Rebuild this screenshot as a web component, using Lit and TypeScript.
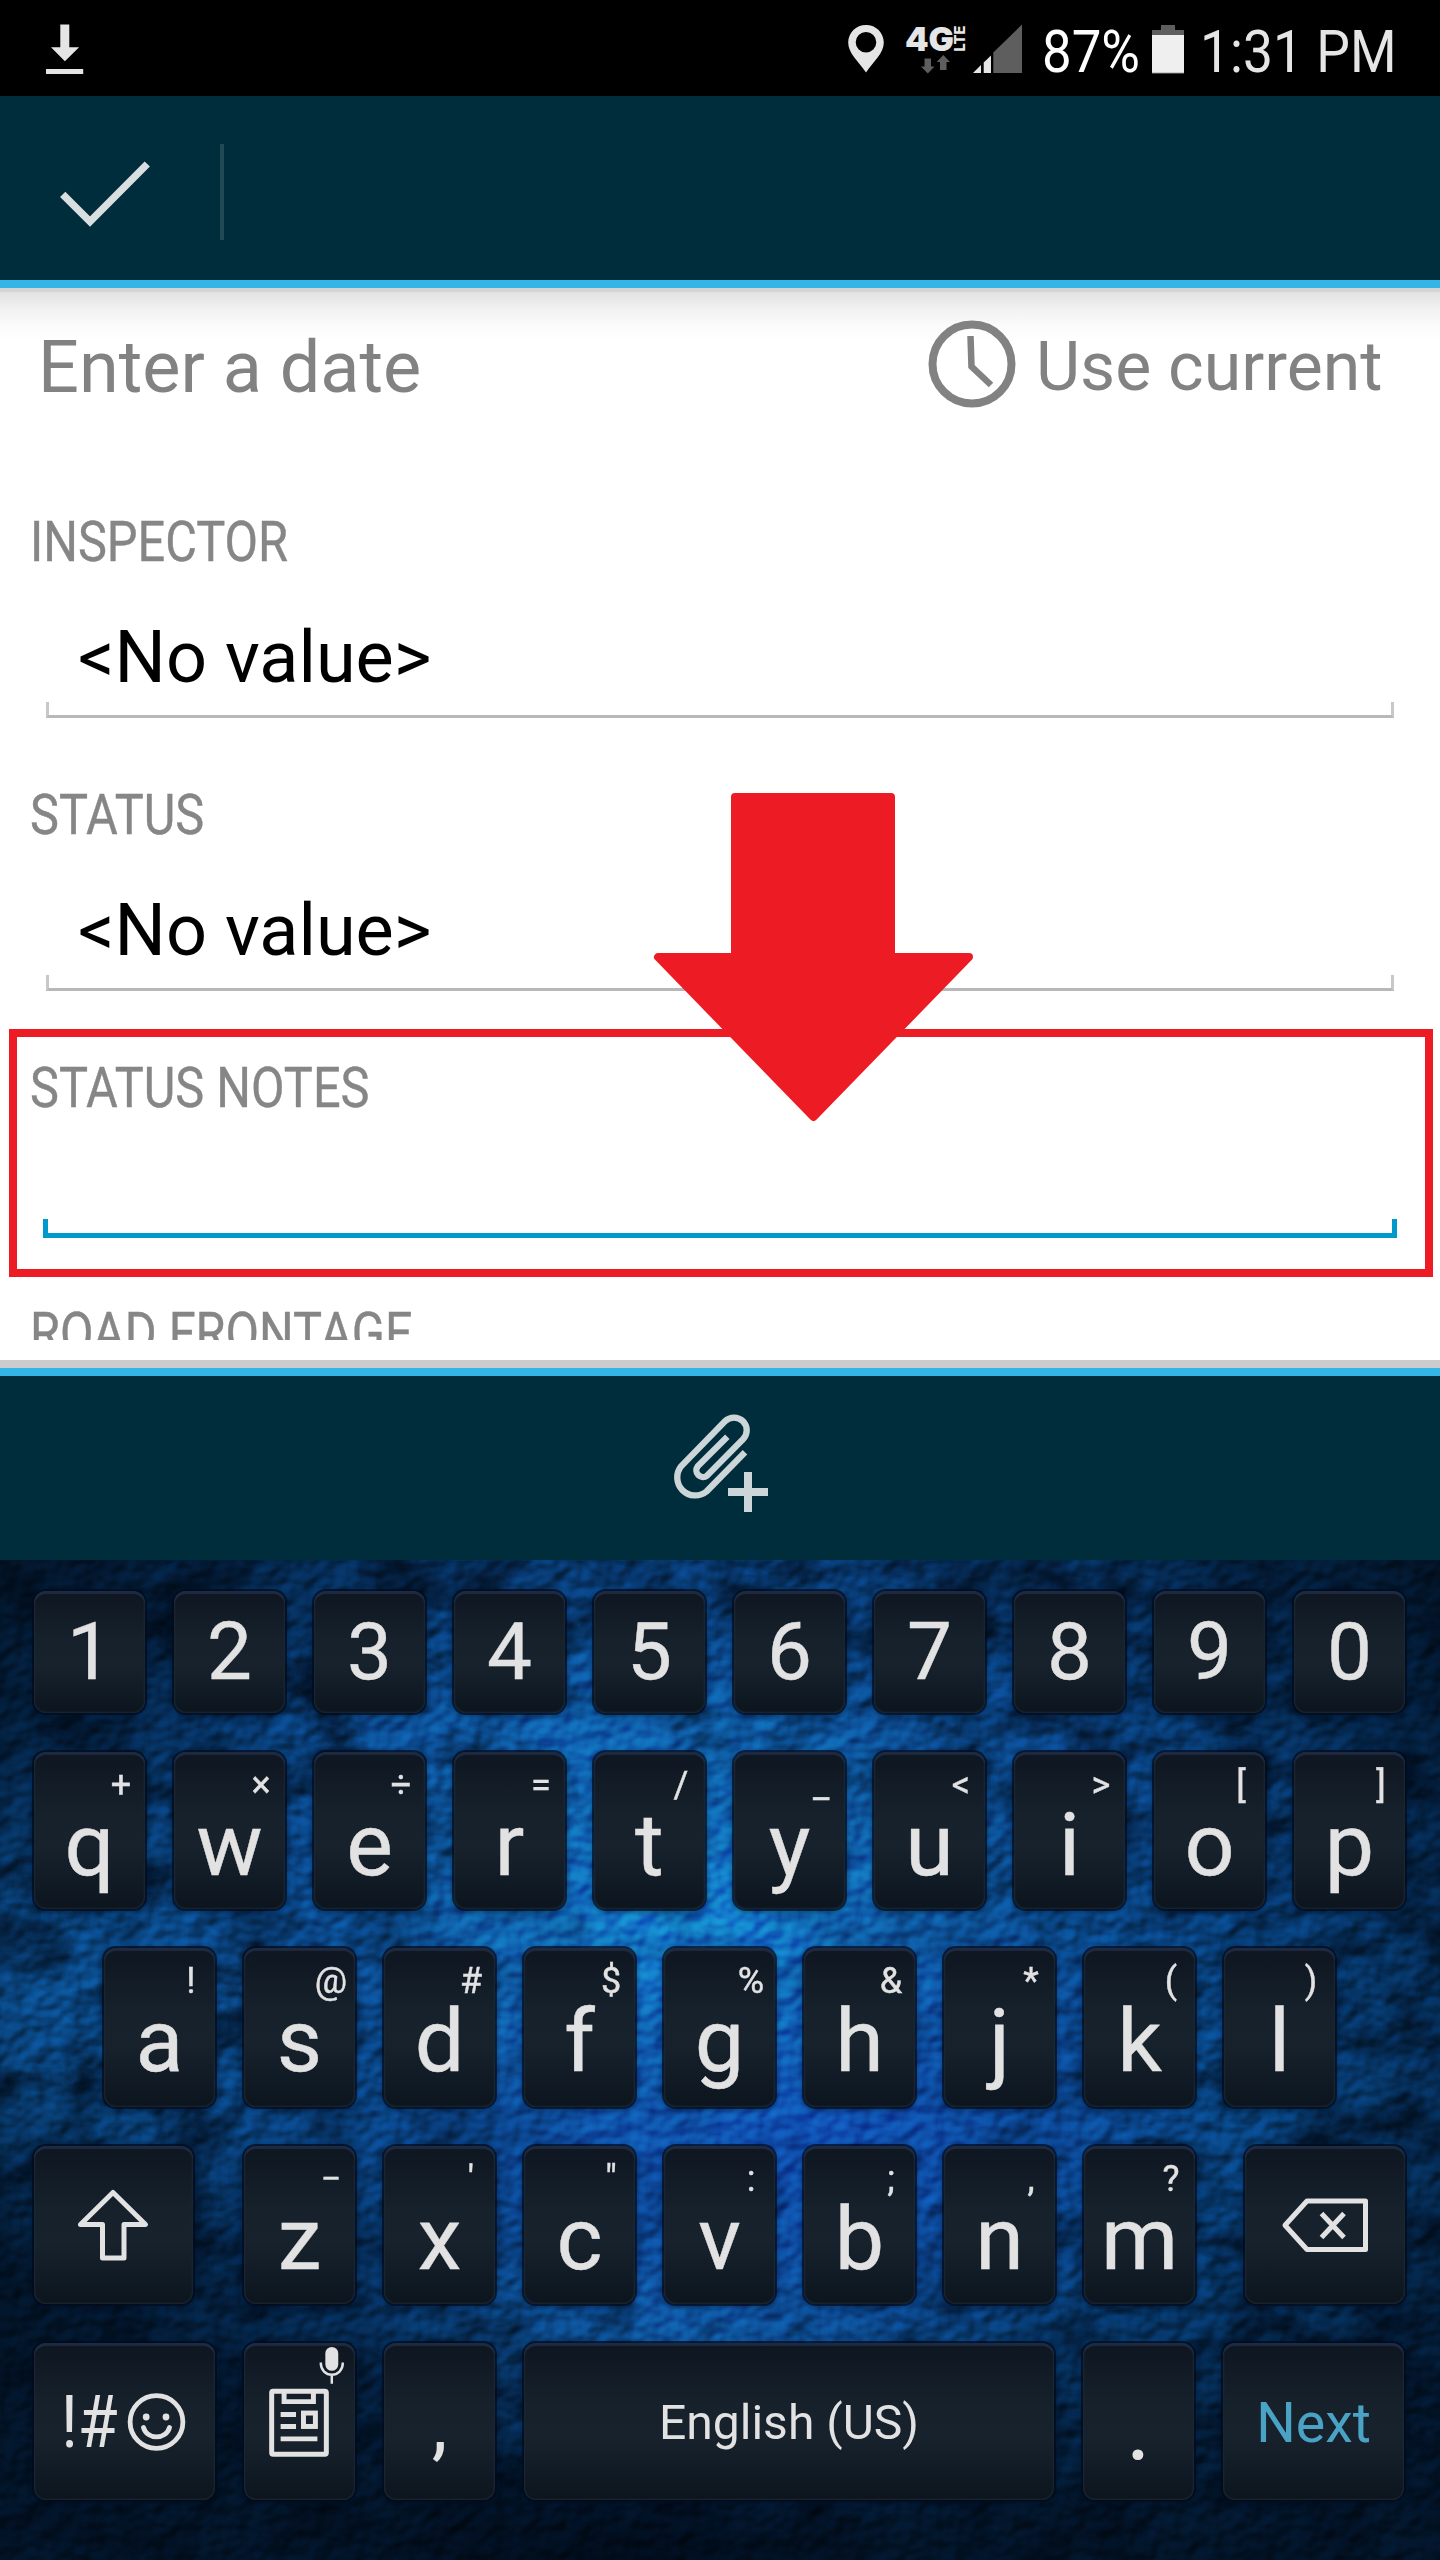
import { LitElement, html, svg, css, nothing } from "lit";
import { customElement, property } from "lit/decorators.js";

const INK = "#e2e2e2";

@customElement("status-bar")
class StatusBar extends LitElement {
  static styles = css`
    :host {
      display: flex;
      height: 96px;
      background: #000;
      color: #e5e5e5;
      font: 400 60px/94px Roboto, sans-serif;
      box-sizing: border-box;
      padding: 0 44px 0 40px;
    }
    svg { display: block; flex: none; }
    .spacer { flex: 1; }
    .network { margin-left: 15px; }
    .percent { color: #fff; width: 95px; margin-left: 16px; white-space: nowrap; padding-top: 5px; }
    .battery { margin-left: 14px; }
    .time { margin-left: 15px; white-space: nowrap; padding-top: 5px; width: 196px; }
    .fit { display: inline-block; transform-origin: 0 50%; }
    .time .fit { transform: scaleX(0.89); }
    .percent .fit { transform: scaleX(0.88); }
    .logo { font: 900 33px Inter, Roboto, sans-serif; }
    .lte { font: 800 15px Inter, Roboto, sans-serif; }
  `;
  render() {
    return html`
      <svg width="50" height="96" viewBox="40 0 50 96" fill="#e5e5e5">
        <path d="M60.3 24.5h9V47.300h9.800L64.900 61.200 51 47.300h9.300zM46 69h37.200v5H46z" />
      </svg>
      <div class="spacer"></div>
      <svg width="40" height="96" viewBox="846 0 40 96">
        <path fill="#e5e5e5" fill-rule="evenodd" d="M866 25c-10 0-17.800 7.700-17.800 17.500 0 11 10.500 19 17.800 30 7.300-11 17.800-19 17.800-30C883.800 32.700 876 25 866 25zm0 7a10.300 10.300 0 1 1 0 20.600 10.300 10.300 0 0 1 0-20.600z" />
      </svg>
      <svg class="network" width="125" height="96" viewBox="901 0 125 96">
        <text class="logo" x="905" y="51" textLength="49" lengthAdjust="spacingAndGlyphs" fill="#e5e5e5">4G</text>
        <text class="lte" transform="translate(965 51.500) rotate(-90)" textLength="26" lengthAdjust="spacingAndGlyphs" fill="#e5e5e5">LTE</text>
        <path fill="#5e5e5e" d="M924.500 58.500h6.500v8h3.500L927.800 73.500 921 66.500h3.500zM940 70h6.500v-8h3.500L943.300 55 936.700 62h3.300z" />
        <path fill="#e5e5e5" d="M973 73l8-8v8zM983.700 73V62.500l7.300-7V73z" />
        <path fill="#5e5e5e" d="M993.300 73V52.500L1022 24.500V73z" />
      </svg>
      <div class="percent"><span class="fit">87%</span></div>
      <svg class="battery" width="34" height="96" viewBox="1151 0 34 96">
        <path fill="#5e5e5e" d="M1161 25h14v5h9v43.700h-32V30h9z" />
        <path fill="#efefef" d="M1152 35h32v37.800h-32z" />
      </svg>
      <div class="time"><span class="fit">1:31 PM</span></div>
    `;
  }
}

@customElement("app-bar")
class AppBar extends LitElement {
  static styles = css`
    :host {
      display: flex;
      align-items: center;
      height: 192px;
      box-sizing: border-box;
      border-bottom: 8px solid #33b5e5;
      background: #002d3c;
    }
    svg { display: block; }
    .done { width: 220px; height: 184px; }
    .divider { width: 4px; height: 96px; margin-top: 7px; background: #234956; }
  `;
  render() {
    return html`
      <svg class="done" viewBox="0 96 220 184">
        <path fill="none" stroke="#d9dfe1" stroke-width="7.400" d="M62.700 194.300L90 221.600 147.300 164" />
      </svg>
      <div class="divider"></div>
    `;
  }
}

@customElement("form-field")
class FormField extends LitElement {
  @property() label = "";
  @property() value = "";
  @property({ type: Boolean, reflect: true }) active = false;
  @property({ type: Boolean }) bare = false;

  static styles = css`
    :host { display: block; padding-top: 67px; font-family: Roboto, sans-serif; }
    :host([active]) { margin-bottom: -2px; }
    .label {
      display: block;
      width: max-content;
      margin-left: 30px;
      font-size: 56px;
      line-height: 60px;
      color: #868686;
      transform: scaleX(0.869);
      transform-origin: 0 50%;
      white-space: nowrap;
      -webkit-text-stroke: 0.4px #868686;
    }
    .value { padding: 44px 0 2px 78px; font-size: 72px; line-height: 84px; color: #000; white-space: nowrap; }
    .empty { height: 101px; }
    .bracket {
      height: 16px;
      margin: 0 46px;
      box-sizing: border-box;
      border: 3px solid #c8c8c8;
      border-top: 0;
      border-bottom-color: #b8b8b8;
    }
    .focus { height: 19px; margin: 0 43px; border: 5px solid #0099cc; border-top: 0; }
  `;
  render() {
    return html`
      <span class="label">${this.label}</span>
      ${this.bare
        ? nothing
        : this.active
          ? html`<div class="empty"></div><div class="bracket focus"></div>`
          : html`<div class="value">${this.value}</div><div class="bracket"></div>`}
    `;
  }
}

@customElement("inspection-form")
class InspectionForm extends LitElement {
  static styles = css`
    :host {
      display: block;
      position: relative;
      height: 1080px;
      box-sizing: border-box;
      border-bottom: 8px solid #ccc;
      background: linear-gradient(#d4d4d4 0 4px, #e2e2e2 4px, #f2f2f2 22px, #fbfbfb 38px, #fff 54px);
      font-family: Roboto, sans-serif;
    }
    .viewport { height: 1052px; overflow: hidden; }
    .date { display: flex; align-items: center; height: 157px; padding: 0 55px 0 38px; box-sizing: border-box; color: #828282; white-space: nowrap; }
    .prompt { flex: 1; font-size: 72px; line-height: 84px; padding-top: 2px; }
    .clock { display: block; width: 96px; height: 96px; margin-top: -5px; }
    .current { font-size: 68px; line-height: 84px; width: 349px; margin-left: 15px; }
    .highlight {
      position: absolute;
      left: 9px;
      top: 741px;
      width: 1424px;
      height: 248px;
      box-sizing: border-box;
      border: 8px solid #ed1c24;
    }
    .arrow { position: absolute; left: 653px; top: 505px; width: 321px; height: 329px; }
  `;
  render() {
    return html`
      <div class="viewport">
        <div class="date">
          <div class="prompt">Enter a date</div>
          <svg class="clock" viewBox="-47 -48 96 96" fill="none" stroke="#828282">
            <circle r="39.500" stroke-width="8" />
            <path d="M-1.500 -28L-0.500 2.500 19 21" stroke-width="6.500" />
          </svg>
          <div class="current">Use current</div>
        </div>
        <form-field label="INSPECTOR" value="&lt;No value&gt;"></form-field>
        <form-field label="STATUS" value="&lt;No value&gt;"></form-field>
        <form-field label="STATUS NOTES" active></form-field>
        <form-field label="ROAD FRONTAGE" bare></form-field>
      </div>
      <div class="highlight"></div>
      <svg class="arrow" viewBox="653 793 321 329">
        <path fill="#ed1c24" stroke="#ed1c24" stroke-width="8" stroke-linejoin="round" d="M735 797H891V957H969L813.500 1117 658 957H735z" />
      </svg>
    `;
  }
}

@customElement("attach-bar")
class AttachBar extends LitElement {
  static styles = css`
    :host {
      display: flex;
      height: 192px;
      box-sizing: border-box;
      border-top: 8px solid #33b5e5;
      padding: 34px 0 0 670px;
      background: #002d3c;
    }
    svg { display: block; }
  `;
  render() {
    return html`
      <svg width="100" height="106" viewBox="150 90 300 318">
        <path fill="none" stroke="#ccd5d8" stroke-width="19" d="M322 170L233 259A20 20 0 0 0 261 287L369 178A38 38 0 0 0 315 124L184 258A54 54 0 0 0 260 334L375 217" />
        <path fill="#ccd5d8" d="M372 276h24v48h48v24h-48v48h-24v-48h-48v-24h48z" />
      </svg>
    `;
  }
}

@customElement("soft-key")
class SoftKey extends LitElement {
  @property() label = "";
  @property() hint = "";
  @property() kind = "letter";

  static styles = css`
    :host {
      display: flex;
      flex-direction: column;
      flex: none;
      width: 111px;
      box-sizing: border-box;
      border-radius: 12px;
      color: #e2e2e2;
      background: linear-gradient(#0e1620, #16212c 40%, #17222d 60%, #0c151e);
      box-shadow: inset 0 3px 1px #1e2a42, inset 0 0 2px 1px #1f2832, 0 0 0 2px rgba(1, 12, 28, 0.7), 0 2px 5px 2px rgba(0, 12, 32, 0.4);
      font-family: Roboto, sans-serif;
      text-align: center;
      white-space: nowrap;
    }
    svg { display: block; }
    .hint { height: 40px; width: 52px; margin: 13px 0 -10px 61px; font-size: 36px; line-height: 40px; -webkit-text-stroke: 0.4px #e2e2e2; }
    .letter { font-size: 88px; line-height: 100px; -webkit-text-stroke: 0.4px #e2e2e2; }
    .digit { font-size: 80px; line-height: 123px; -webkit-text-stroke: 0.4px #e2e2e2; }
    .comma { font-size: 80px; line-height: 160px; padding-top: 1px; }
    .period { font-size: 96px; line-height: 166px; }
    .space { font-size: 48px; line-height: 160px; }
    .next { font-size: 55.500px; line-height: 161px; color: #4aa3c5; }
    .word { display: inline-block; }
    .symbols { display: flex; padding: 0 0 0 27px; font-size: 72px; line-height: 159px; }
    .symbols .word { width: 65px; text-align: left; transform: scaleX(0.9); transform-origin: 0 50%; }
  `;

  private drawing() {
    switch (this.kind) {
      case "shift":
        return html`<svg width="159" height="158" viewBox="34 2146 159 158">
          <path fill="none" stroke=${INK} stroke-width="5" stroke-linejoin="round" d="M113 2192.500L145.500 2224.500H124V2258H102.500V2224.500H80.500z" />
        </svg>`;
      case "backspace":
        return html`<svg width="160" height="158" viewBox="1245 2146 160 158">
          <path fill="none" stroke=${INK} stroke-width="5" stroke-linejoin="round" d="M1365.500 2201V2249.500H1307L1285 2225.200 1307 2201zM1321.500 2213.500L1344 2237.500M1344 2213.500L1321.500 2237.500" />
        </svg>`;
      case "clipboard":
        return html`<svg width="111" height="158" viewBox="244 2343 111 158" fill="none" stroke=${INK} stroke-width="5">
          <rect x="271.500" y="2391.500" width="55" height="63.500" rx="1.500" />
          <path d="M284 2392V2402H313.500V2392M280.500 2415H296M280.500 2427H296M280.500 2439.500H317.500" />
          <rect x="303.500" y="2413.500" width="12" height="13.500" />
          <rect x="325.500" y="2347" width="13" height="24" rx="6.500" fill=${INK} stroke="none" />
          <path stroke-width="2.500" d="M321 2362.500V2364A11 11 0 0 0 343 2364V2362.500M332 2375V2384" />
        </svg>`;
      case "symbols":
        return html`<div class="symbols">
          <span class="word">!#</span>
          <svg width="62" height="158" viewBox="126 2343 62 158" fill="none" stroke=${INK} stroke-width="4.800">
            <circle cx="156.500" cy="2422" r="26.400" />
            <path d="M143.500 2427.500C147 2440 166 2440 169.500 2427.500" stroke-linecap="round" />
            <g fill=${INK} stroke="none"><circle cx="146.200" cy="2417" r="3.400" /><circle cx="166" cy="2417" r="3.400" /></g>
          </svg>
        </div>`;
      default:
        return nothing;
    }
  }

  render() {
    const drawing = this.drawing();
    if (drawing !== nothing) return drawing;
    return html`
      ${this.hint ? html`<div class="hint">${this.hint}</div>` : nothing}
      <div class=${this.kind}><span class="word">${this.label}</span></div>
    `;
  }
}

const pairs = (letters: string, hints: string) =>
  [...letters].map((l, i) => html`<soft-key label=${l} hint=${[...hints][i]}></soft-key>`);

@customElement("soft-keyboard")
class SoftKeyboard extends LitElement {
  static styles = css`
    :host {
      display: block;
      position: relative;
      height: 1000px;
      overflow: hidden;
      isolation: isolate;
      background:
        radial-gradient(ellipse 330px 240px at 690px 360px, rgba(20, 134, 216, 0.9), rgba(18, 118, 200, 0.45) 50%, transparent),
        radial-gradient(ellipse 360px 160px at 560px 190px, rgba(16, 104, 190, 0.6), transparent),
        radial-gradient(ellipse 420px 240px at 800px 560px, rgba(16, 78, 184, 0.9), transparent),
        radial-gradient(ellipse 330px 150px at 700px 765px, rgba(18, 104, 190, 0.7), transparent),
        radial-gradient(ellipse 360px 260px at 80px 440px, rgba(12, 88, 160, 0.75), transparent),
        radial-gradient(ellipse 420px 420px at 1180px 560px, rgba(8, 72, 136, 0.8), transparent),
        radial-gradient(ellipse 300px 120px at 620px 1000px, rgba(1, 10, 24, 0.8), transparent),
        radial-gradient(ellipse 860px 620px at 720px 370px, #0e58a2 20%, #094282 50%, #04284f 78%, #021428);
    }
    .texture { position: absolute; inset: 0; display: block; }
    .relief { mix-blend-mode: overlay; opacity: 0.6; }
    .rows { position: relative; display: grid; grid-template-rows: 122px 157px 159px 158px 157px; row-gap: 39px; padding: 31px 34px 0; }
    .row { display: flex; gap: 29px; }
    .home { padding-left: 70px; }
    .shift { width: 159px; margin-right: 22px; }
    .back { width: 160px; margin-left: 21px; }
    .wide { width: 181px; }
    .space { width: 530px; }
  `;
  render() {
    return html`
      <svg class="texture" width="1440" height="1000">
        ${svg`
          <filter id="grain" x="0" y="0" width="100%" height="100%" color-interpolation-filters="sRGB">
            <feTurbulence type="fractalNoise" baseFrequency="0.014 0.020" numOctaves="5" seed="12" />
            <feColorMatrix values="0 0 0 0 0.005  0 0 0 0 0.05  0 0 0 0 0.11  2.800 0 0 0 -1.200" />
          </filter>
          <radialGradient id="edge" gradientUnits="userSpaceOnUse" cx="740" cy="500" r="800" gradientTransform="translate(0 80) scale(1 0.800)">
            <stop offset="0" stop-color="#fff" stop-opacity="0.080" />
            <stop offset="0.350" stop-color="#fff" stop-opacity="0.250" />
            <stop offset="0.750" stop-color="#fff" stop-opacity="0.800" />
            <stop offset="1" stop-color="#fff" stop-opacity="0.800" />
          </radialGradient>
          <mask id="fade"><rect width="1440" height="1000" fill="url(#edge)" /></mask>
          <g mask="url(#fade)"><rect width="1440" height="1000" filter="url(#grain)" /></g>
        `}
      </svg>
      <svg class="texture relief" width="1440" height="1000">
        ${svg`
          <filter id="leather" x="0" y="0" width="100%" height="100%" color-interpolation-filters="sRGB">
            <feTurbulence type="fractalNoise" baseFrequency="0.050 0.060" numOctaves="2" seed="7" />
            <feDiffuseLighting surfaceScale="4.500" diffuseConstant="0.780" lighting-color="#fff">
              <feDistantLight azimuth="235" elevation="42" />
            </feDiffuseLighting>
          </filter>
          <rect width="1440" height="1000" filter="url(#leather)" />
        `}
      </svg>
      <div class="rows">
        <div class="row">${[..."1234567890"].map((d) => html`<soft-key kind="digit" label=${d}></soft-key>`)}</div>
        <div class="row">${pairs("qwertyuiop", "+×÷=/_<>[]")}</div>
        <div class="row home">${pairs("asdfghjkl", "!@#$%&*()")}</div>
        <div class="row">
          <soft-key class="shift" kind="shift"></soft-key>
          ${pairs("zxcvbnm", "−'\":;,?")}
          <soft-key class="back" kind="backspace"></soft-key>
        </div>
        <div class="row">
          <soft-key class="wide" kind="symbols"></soft-key>
          <soft-key kind="clipboard"></soft-key>
          <soft-key kind="comma" label=","></soft-key>
          <soft-key class="space" kind="space" label="English (US)"></soft-key>
          <soft-key kind="period" label="."></soft-key>
          <soft-key class="wide" kind="next" label="Next"></soft-key>
        </div>
      </div>
    `;
  }
}

@customElement("app-root")
class AppRoot extends LitElement {
  static styles = css`
    :host { display: flex; flex-direction: column; width: 1440px; height: 2560px; overflow: hidden; background: #fff; }
    :host > * { flex: none; }
  `;
  render() {
    return html`
      <status-bar></status-bar>
      <app-bar></app-bar>
      <inspection-form></inspection-form>
      <attach-bar></attach-bar>
      <soft-keyboard></soft-keyboard>
    `;
  }
}
